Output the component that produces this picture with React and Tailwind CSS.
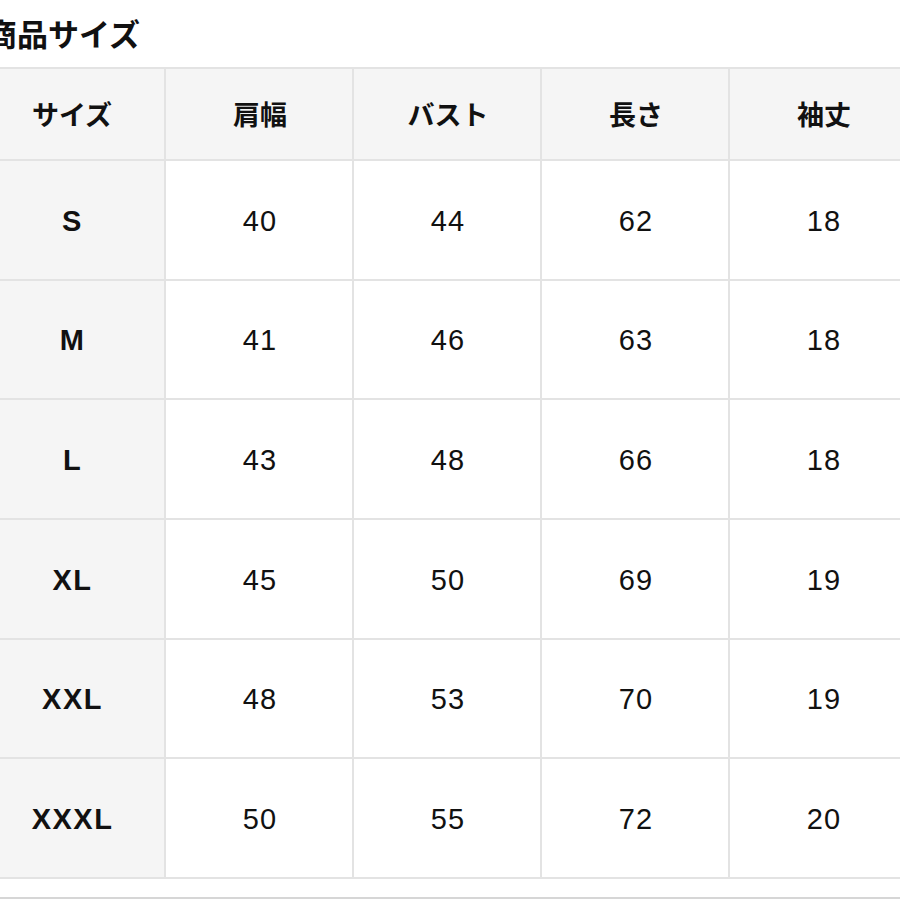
import React from 'react';

const headers = ['サイズ', '肩幅', 'バスト', '長さ', '袖丈'];

const rows = [
    { size: 'S', values: [40, 44, 62, 18] },
    { size: 'M', values: [41, 46, 63, 18] },
    { size: 'L', values: [43, 48, 66, 18] },
    { size: 'XL', values: [45, 50, 69, 19] },
    { size: 'XXL', values: [48, 53, 70, 19] },
    { size: 'XXXL', values: [50, 55, 72, 20] },
];

export default function App() {
    return (
        <div
            className="w-[900px] h-[900px] overflow-hidden bg-white text-[#111]"
            style={{ fontFamily: '"Liberation Sans", "Noto Sans CJK JP", sans-serif' }}
        >
            {/* Title */}
            <div className="h-[67px] flex items-center ml-[-14px] pt-[3px]">
                <h1 className="text-[31px] font-bold leading-none">商品サイズ</h1>
            </div>

            {/* Size table */}
            <div className="ml-[-24px] w-[942px] bg-[#e3e3e3] p-[2px] grid grid-cols-[repeat(5,186px)] gap-[2px]">
                {headers.map(h => (
                    <div key={h} className="h-[90px] bg-[#f5f5f5] flex items-center justify-center pt-[4px] pl-[2px] text-[27px] font-bold">
                        {h}
                    </div>
                ))}
                {rows.map(row => (
                    <React.Fragment key={row.size}>
                        <div className="h-[117.7px] bg-[#f5f5f5] flex items-center justify-center pt-[3px] pl-[3px] text-[29px] font-bold tracking-[1.5px]">
                            {row.size}
                        </div>
                        {row.values.map((v, i) => (
                            <div key={i} className="h-[117.7px] bg-white flex items-center justify-center pt-[3px] pl-[2px] text-[29px] tracking-[1px]">
                                {v}
                            </div>
                        ))}
                    </React.Fragment>
                ))}
            </div>

            <div className="h-[18px]" />
            <div className="h-[2px] bg-[#d6d6d6]" />
        </div>
    );
}
